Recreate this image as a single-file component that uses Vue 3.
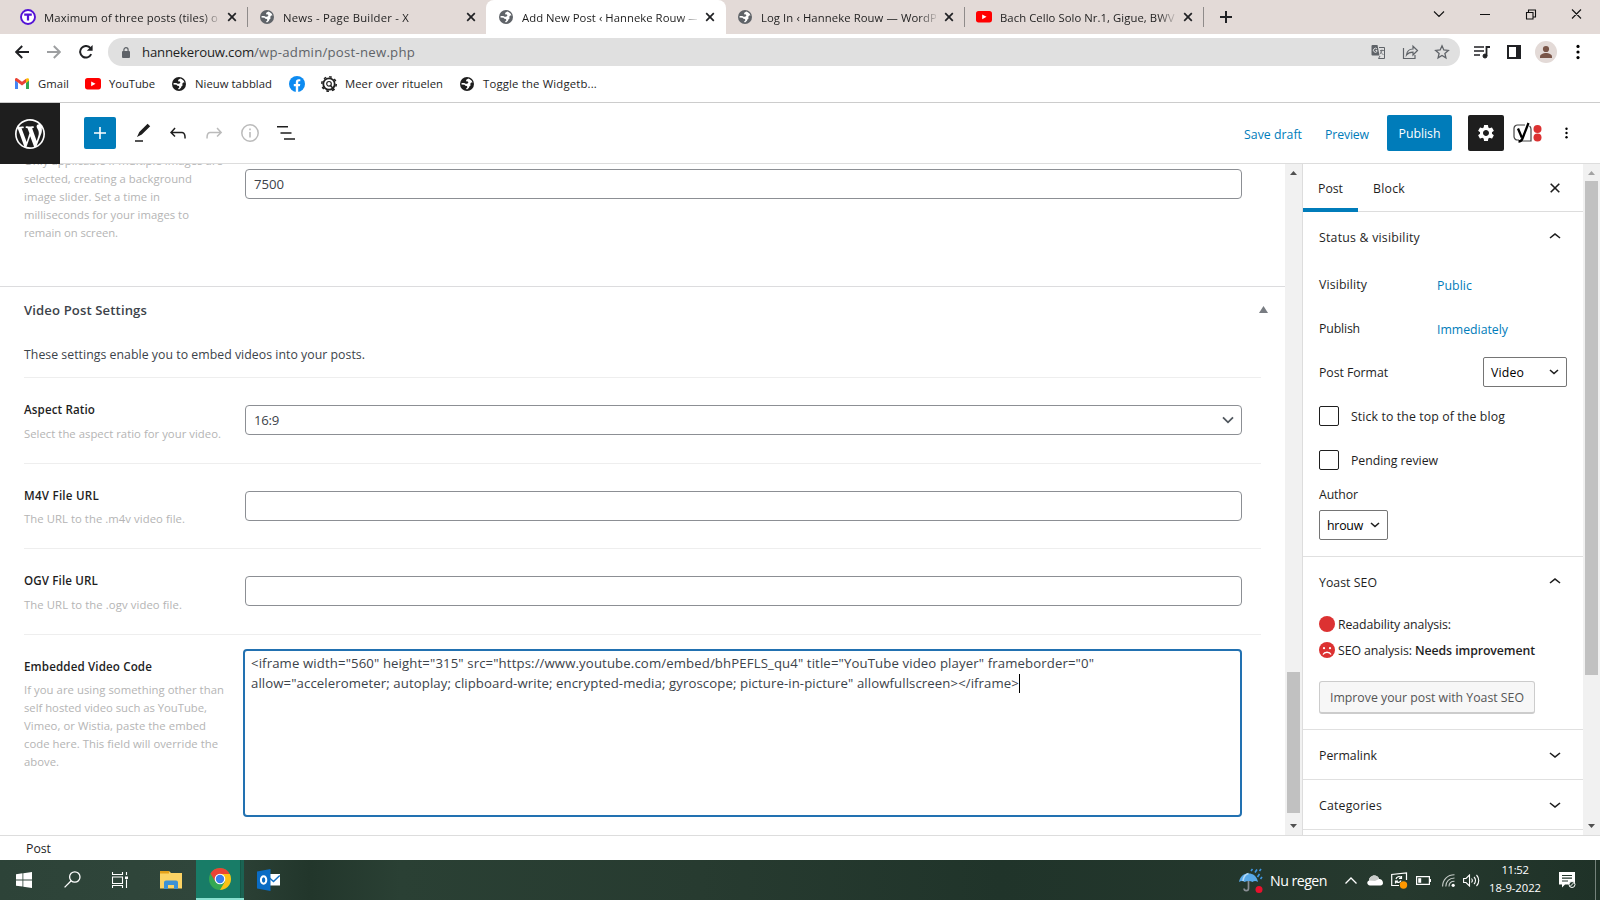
<script setup>
// Spreads the letters of a label so that it takes up the given width.
const vFit = {
  mounted(el, { value }) {
    const natural = el.getBoundingClientRect().width
    const count = el.textContent.length
    el.style.letterSpacing = ((value - natural) / count).toFixed(3) + 'px'
  }
}

const tabs = [
  { icon: 'tribe', text: 'Maximum of three posts (tiles) on', w: 181, sep: true },
  { icon: 'globe', text: 'News - Page Builder - X', w: 126 },
  { icon: 'globe', text: 'Add New Post ‹ Hanneke Rouw — W', w: 191, active: true },
  { icon: 'globe', text: 'Log In ‹ Hanneke Rouw — WordPress', w: 198, sep: true },
  { icon: 'yt', text: 'Bach Cello Solo Nr.1, Gigue, BWV 1', w: 184, sep: true }
]

const sliderHelp = [
  ['Only applicable if multiple images are', 199],
  ['selected, creating a background', 168],
  ['image slider. Set a time in', 136],
  ['milliseconds for your images to', 165],
  ['remain on screen.', 94]
]
const rows = [
  { label: 'Aspect Ratio', lw: 71, help: [['Select the aspect ratio for your video.', 197]], value: '16:9', cls: 'r1' },
  { label: 'M4V File URL', lw: 75, help: [['The URL to the .m4v video file.', 161]], cls: 'r2' },
  { label: 'OGV File URL', lw: 74, help: [['The URL to the .ogv video file.', 158]], cls: 'r3' }
]
const embedHelp = [
  ['If you are using something other than', 200],
  ['self hosted video such as YouTube,', 183],
  ['Vimeo, or Wistia, paste the embed', 182],
  ['code here. This field will override the', 194],
  ['above.', 35]
]
const code = [
  ['<iframe width="560" height="315" src="https://www.youtube.com/embed/bhPEFLS_qu4" title="YouTube video player" frameborder="0"', 843],
  ['allow="accelerometer; autoplay; clipboard-write; encrypted-media; gyroscope; picture-in-picture" allowfullscreen></iframe>', 768]
]
</script>

<template>
  <div class="screen">
    <svg class="defs" width="0" height="0">
      <symbol id="globe" viewBox="0 0 14 14">
        <circle cx="7" cy="7" r="7" fill="currentColor" />
        <path d="M8.300 1.600 6.300 2.700l-.3 1.500 1.900.3.500 1.100-1.200 1.100H5.600L4.300 5.900l-2.700.2-.1 1.300 3 .3.900 1.100 1.500.2.5 1.200-1.400 1.600 1 .6 2-1.600.4-1.400 1.300-1.200-.5-1.100.9-1.500 1.400-.2-.8-1.700-1.800-1.400z" fill="#fff" />
      </symbol>
      <symbol id="yt" viewBox="0 0 16 12">
        <rect width="16" height="11.4" rx="2.6" fill="#f00" />
        <path d="M6.2 3.4v4.8l4.3-2.4z" fill="#fff" />
      </symbol>
      <symbol id="tribe" viewBox="0 0 16 16">
        <circle cx="8" cy="8" r="7" fill="#fff" stroke="#5312d6" stroke-width="1.9" />
        <path d="M4.2 5.6h7.6M8 5.6v6" stroke="#5312d6" stroke-width="2.2" fill="none" />
      </symbol>
      <symbol id="up" viewBox="0 0 24 24"><path d="M6.5 12.4L12 8l5.5 4.4-.9 1.2L12 10l-4.5 3.6-1-1.2z" /></symbol>
      <symbol id="down" viewBox="0 0 24 24"><path d="M17.5 11.6L12 16l-5.5-4.4.9-1.2L12 14l4.5-3.6 1 1.2z" /></symbol>
      <symbol id="dots" viewBox="0 0 4 16"><circle cx="2" cy="2.4" r="1.6" /><circle cx="2" cy="8" r="1.6" /><circle cx="2" cy="13.6" r="1.6" /></symbol>
    </svg>

    <!-- Tab strip -->
    <div class="tabs">
      <div v-for="t in tabs" :key="t.text" class="tab" :class="{ active: t.active, sep: t.sep }">
        <svg class="fav" :class="t.icon"><use :href="'#' + t.icon" /></svg>
        <div class="tabtext"><span v-fit="t.w">{{ t.text }}</span></div>
        <svg class="x" viewBox="0 0 10 10"><path d="M1.2 1.2l7.6 7.6M8.8 1.2L1.2 8.8" stroke="#202124" stroke-width="1.7" /></svg>
      </div>
      <svg class="plus" viewBox="0 0 12 12"><path d="M6 0v12M0 6h12" stroke="#202124" stroke-width="2" /></svg>
      <svg class="win" width="150" height="14" viewBox="0 0 150 14" fill="none" stroke="#111" stroke-width="1.1">
        <path d="M4 4.5l5 5 5-5M50 7.5h10M96.5 5.5h6.500v6.500h-6.500zM98.500 5.500v-2.500h7v7h-2.500M142 2.500l9 9M151 2.500l-9 9" />
      </svg>
    </div>

    <!-- Toolbar -->
    <div class="toolbar">
      <svg class="back" viewBox="0 0 14 14"><path d="M14 7H1.500M7.200 1L1.200 7l6 6" fill="none" stroke="#202124" stroke-width="1.900" /></svg>
      <svg class="fwd" viewBox="0 0 14 14"><path d="M0 7h12.500M6.800 1l6 6-6 6" fill="none" stroke="#9d9fa1" stroke-width="1.900" /></svg>
      <svg class="reload" viewBox="0 0 14 14"><path d="M12.200 9.200A5.800 5.800 0 1 1 11.500 3.200" fill="none" stroke="#202124" stroke-width="2" /><path d="M13.600 0v5.800H7.800z" fill="#202124" /></svg>
      <div class="omni">
        <svg class="lock" viewBox="0 0 8 11"><rect y="4" width="8" height="7" rx="1" fill="#5f6368" /><path d="M1.900 4.500V2.800a2.100 2.100 0 0 1 4.200 0v1.700" fill="none" stroke="#5f6368" stroke-width="1.200" /></svg>
        <span v-fit="112" class="host">hannekerouw.com</span><span v-fit="161" class="path">/wp-admin/post-new.php</span>
        <svg class="oicons" width="80" height="16" viewBox="0 0 80 16" fill="none" stroke="#5f6368">
          <path d="M1.500 1h5l2 10.500h-7a1 1 0 0 1-1-1V2a1 1 0 0 1 1-1z" fill="#5f6368" stroke="none" />
          <path d="M8 3.500h5.500v11H7.500L9 12" /><path d="M9 6.500h4M11 5.500c0 2-1 3.500-2 4.500M9.500 7.500c.5 1.500 1.500 2.500 3 3" stroke-width=".8" />
          <path d="M6 5a2 2 0 1 0 0 2.500V6.500H4.500" stroke="#eee" stroke-width=".9" />
          <path d="M32.500 4v10.500H44V11M35.500 11c.5-4 3-6 6.500-6V2.200L46.500 6.500 42 11V8.200c-3 0-5 .8-6.500 2.800z" stroke-width="1.200" />
          <path d="M71 1.800l1.800 4.200 4.500.4-3.400 3 1 4.400L71 11.500l-3.900 2.300 1-4.400-3.400-3 4.500-.4z" stroke-width="1.300" />
        </svg>
      </div>
      <svg class="music" viewBox="0 0 16 14" stroke="#202124" fill="#202124"><path d="M0 2h10M0 6h10M0 10h6" stroke-width="1.700" /><path d="M12.500 11V2H16" fill="none" stroke-width="1.800" /><circle cx="11" cy="11" r="2" /></svg>
      <svg class="panel" viewBox="0 0 14 14"><path d="M1 1h12v12H1z" fill="none" stroke="#202124" stroke-width="2" /><path d="M9 1h5v12H9z" fill="#202124" /></svg>
      <svg class="avatar" viewBox="0 0 22 22"><circle cx="11" cy="11" r="11" fill="#e3dad7" /><circle cx="11" cy="8" r="3.100" fill="#795548" /><path d="M5 17v-1.500c0-2.300 3.500-3.500 6-3.500s6 1.200 6 3.500V17z" fill="#795548" /></svg>
      <svg class="cdots"><use href="#dots" /></svg>
    </div>

    <!-- Bookmarks -->
    <div class="bookmarks">
      <div class="bm b1"><svg width="14" height="11" viewBox="0 0 14 11"><path d="M0 1.500V11h3V4.500z" fill="#4285f4" /><path d="M14 1.500V11h-3V4.500z" fill="#34a853" /><path d="M0 1.300C0 0 1.500-.4 2.500.4L7 3.800 11 .7V4.500l-4 3-4-3-3-2z" fill="#ea4335" /><path d="M11 .7c1-.9 3-.6 3 1v1L11 5z" fill="#fbbc04" /></svg><span v-fit="31">Gmail</span></div>
      <div class="bm b2"><svg width="16" height="12"><use href="#yt" /></svg><span v-fit="46">YouTube</span></div>
      <div class="bm b3"><svg width="14" height="14"><use href="#globe" /></svg><span v-fit="77">Nieuw tabblad</span></div>
      <div class="bm b4"><svg width="16" height="16" viewBox="0 0 16 16"><circle cx="8" cy="8" r="8" fill="#0d8bf1" /><path d="M6.800 16v-5.700H4.800V8h2V6.300c0-2 1.100-3.100 2.900-3.100.8 0 1.600.15 1.600.15v1.900h-.9c-.9 0-1.200.6-1.200 1.200V8h2.100l-.4 2.300H9.200V16z" fill="#fff" /></svg></div>
      <div class="bm b5"><svg width="16" height="16" viewBox="0 0 16 16" fill="none" stroke="#222"><circle cx="8" cy="8" r="5.700" stroke-width="1.800" /><circle cx="8" cy="8" r="7.200" stroke-width="1.600" stroke-dasharray="2.600 3.050" /><circle cx="8" cy="7.800" r="2.300" stroke-width="1.200" /><path d="M9.500 9.500L13.500 14" stroke-width="1.500" /></svg><span v-fit="98">Meer over rituelen</span></div>
      <div class="bm b6"><svg width="14" height="14"><use href="#globe" /></svg><span v-fit="114">Toggle the Widgetb...</span></div>
    </div>

    <!-- Editor header -->
    <div class="header">
      <div class="wp"><svg width="30" height="30" viewBox="0 0 20 20" fill="#fff"><path d="M20 10c0-5.510-4.490-10-10-10C4.480 0 0 4.490 0 10c0 5.520 4.480 10 10 10 5.510 0 10-4.480 10-10zM7.780 15.370L4.370 6.220c.55-.02 1.170-.08 1.170-.08.5-.06.44-1.130-.06-1.110 0 0-1.450.11-2.370.11-.18 0-.37 0-.58-.01C4.120 2.690 6.870 1.110 10 1.110c2.330 0 4.450.87 6.050 2.340-.68-.11-1.650.39-1.650 1.580 0 .74.45 1.360.9 2.100.35.61.55 1.360.55 2.460 0 1.490-1.400 5-1.400 5l-3.030-8.370c.54-.02.82-.17.82-.17.5-.05.44-1.250-.06-1.220 0 0-1.440.12-2.380.12-.87 0-2.330-.12-2.330-.12-.5-.03-.56 1.200-.06 1.220l.92.08 1.260 3.410zM17.410 10c.24-.64.74-1.870.43-4.250.7 1.290 1.050 2.710 1.050 4.250 0 3.290-1.730 6.240-4.400 7.780.97-2.590 1.940-5.200 2.920-7.780zM6.100 18.090C3.120 16.650 1.110 13.530 1.110 10c0-1.300.23-2.480.72-3.590C3.250 10.300 4.670 14.200 6.100 18.090zm4.030-6.630l2.580 6.980c-.86.29-1.760.45-2.710.45-.79 0-1.570-.11-2.290-.33.81-2.380 1.620-4.740 2.420-7.100z" /></svg></div>
      <div class="add"><svg width="24" height="24" viewBox="0 0 24 24"><path d="M12 6v12M6 12h12" stroke="#fff" stroke-width="1.600" /></svg></div>
      <div class="tools">
        <svg viewBox="0 0 24 24"><path d="M20.200 5.300L17.600 2.800 9.300 10.900l-2.300 5.100 4.800-2.400zM5 19.200h8v1.600H5z" fill="#1e1e1e" /></svg>
        <svg viewBox="0 0 24 24"><path d="M18.300 11.700c-.6-.6-1.400-.9-2.300-.9H6.700l2.900-3.300-1.100-1-4.500 5L8.500 16l1-1-2.700-2.700H16c.5 0 .9.2 1.300.5 1 1 1 3.400 1 4.500v.3h1.500v-.2c0-1.500 0-4.300-1.500-5.700z" fill="#1e1e1e" /></svg>
        <svg viewBox="0 0 24 24"><path d="M15.600 6.500l-1.100 1 2.900 3.300H8c-.9 0-1.700.3-2.300.9-1.400 1.500-1.400 4.200-1.400 5.600v.2h1.500v-.3c0-1.100 0-3.500 1-4.500.3-.3.7-.5 1.300-.5h9.200L14.500 15l1.100 1.100 4.600-4.600-4.600-5z" fill="#bbb" /></svg>
        <svg viewBox="0 0 24 24"><circle cx="12" cy="12" r="8.200" fill="none" stroke="#bbb" stroke-width="1.500" /><path d="M11.200 11h1.600v5.500h-1.600zM11.200 7.500h1.600v1.700h-1.600z" fill="#bbb" /></svg>
        <svg viewBox="0 0 24 24"><path d="M3 5h11v1.600H3zM6.500 11.200h11v1.600h-11zM21 17.200H10v1.600h11z" fill="#1e1e1e" /></svg>
      </div>
      <div class="actions">
        <span v-fit="58" class="link">Save draft</span>
        <span v-fit="44" class="link">Preview</span>
        <div class="publish"><span v-fit="42">Publish</span></div>
        <div class="cog"><svg width="20" height="20" viewBox="0 0 24 24" fill="#fff"><path d="M19.140 12.940c.04-.3.06-.61.06-.94 0-.32-.02-.64-.07-.94l2.030-1.580c.18-.14.23-.41.12-.61l-1.920-3.320c-.12-.22-.37-.29-.59-.22l-2.390.96c-.5-.38-1.030-.7-1.620-.94L14.400 2.810c-.04-.24-.24-.41-.48-.41h-3.840c-.24 0-.43.17-.47.41L9.250 5.350c-.59.24-1.130.57-1.620.94l-2.390-.96c-.22-.08-.47 0-.59.22L2.740 8.870c-.12.21-.08.47.12.61l2.030 1.580c-.05.3-.09.63-.09.94s.02.64.07.94l-2.030 1.580c-.18.14-.23.41-.12.61l1.920 3.320c.12.22.37.29.59.22l2.390-.96c.5.38 1.030.7 1.620.94l.36 2.540c.05.24.24.41.48.41h3.840c.24 0 .44-.17.47-.41l.36-2.540c.59-.24 1.130-.56 1.620-.94l2.390.96c.22.08.47 0 .59-.22l1.920-3.320c.12-.22.07-.47-.12-.61zM12 15.600c-1.980 0-3.600-1.620-3.600-3.600s1.620-3.600 3.600-3.600 3.600 1.620 3.600 3.600-1.620 3.600-3.600 3.600z" /></svg></div>
        <svg class="yoast" width="30" height="22" viewBox="0 0 30 22"><path d="M12 3H4.500A3.500 3.500 0 0 0 1 6.500v8A3.500 3.500 0 0 0 4.500 18H6M8 19h10V7a4 4 0 0 0-1.500-3" fill="none" stroke="#444" stroke-width="1.200" /><path d="M5 6.500l3.800 9M15.500 1L9.500 16.500c-.8 2-1.800 3-4 3" fill="none" stroke="#000" stroke-width="2.300" /><circle cx="24.500" cy="7" r="4" fill="#dc3232" /><circle cx="24.500" cy="15.500" r="4" fill="#dc3232" /></svg>
        <svg class="hdots"><use href="#dots" /></svg>
      </div>
    </div>

    <!-- Editor body -->
    <div class="body">
      <div class="main">
        <div class="slider">
          <div class="help"><div v-for="l in sliderHelp" :key="l[0]"><span v-fit="l[1]">{{ l[0] }}</span></div></div>
          <div class="input"><span v-fit="30">7500</span></div>
        </div>
        <div class="videohead">
          <span v-fit="123" class="title">Video Post Settings</span>
          <svg width="9" height="7" viewBox="0 0 9 7"><path d="M4.500 0L9 7H0z" fill="#787c82" /></svg>
        </div>
        <div class="intro"><span v-fit="341">These settings enable you to embed videos into your posts.</span></div>
        <div v-for="r in rows" :key="r.label" class="row" :class="r.cls">
          <div class="left">
            <div class="label"><span v-fit="r.lw">{{ r.label }}</span></div>
            <div class="help"><div v-for="l in r.help" :key="l[0]"><span v-fit="l[1]">{{ l[0] }}</span></div></div>
          </div>
          <div class="input">
            <span v-if="r.value" v-fit="25">{{ r.value }}</span>
            <svg v-if="r.value" width="12" height="8" viewBox="0 0 12 8"><path d="M1 1.300l5 5 5-5" fill="none" stroke="#50575e" stroke-width="1.800" /></svg>
          </div>
        </div>
        <div class="row r4">
          <div class="left">
            <div class="label"><span v-fit="128">Embedded Video Code</span></div>
            <div class="help"><div v-for="l in embedHelp" :key="l[0]"><span v-fit="l[1]">{{ l[0] }}</span></div></div>
          </div>
          <div class="textarea">
            <div v-for="(l, i) in code" :key="i" class="cl"><span v-fit="l[1]">{{ l[0] }}</span><i v-if="i === 1" class="caret"></i></div>
          </div>
        </div>
      </div>

      <div class="scroll s1">
        <svg viewBox="0 0 7 4"><path d="M3.500 0L7 4H0z" fill="#505050" /></svg>
        <div class="thumb"></div>
        <svg viewBox="0 0 7 4"><path d="M0 0h7L3.500 4z" fill="#505050" /></svg>
      </div>

      <div class="side">
        <div class="stabs">
          <div class="stab on"><span v-fit="25">Post</span></div>
          <div class="stab"><span v-fit="32">Block</span></div>
          <svg class="sx" viewBox="0 0 10 10"><path d="M.7.7l8.600 8.600M9.300.7L.7 9.300" stroke="#1e1e1e" stroke-width="1.600" /></svg>
        </div>
        <div class="sec status">
          <div class="h"><span v-fit="101">Status &amp; visibility</span><svg><use href="#up" /></svg></div>
          <div class="kv"><div class="key"><span v-fit="48">Visibility</span></div><span v-fit="35" class="link">Public</span></div>
          <div class="kv"><div class="key"><span v-fit="41">Publish</span></div><span v-fit="71" class="link">Immediately</span></div>
          <div class="kv"><div class="key"><span v-fit="69">Post Format</span></div><div class="select vid"><span v-fit="33">Video</span><svg viewBox="0 0 10 6"><path d="M1 1l4 3.500L9 1" fill="none" stroke="#1e1e1e" stroke-width="1.600" /></svg></div></div>
          <div class="kv"><i class="cb"></i><span v-fit="154">Stick to the top of the blog</span></div>
          <div class="kv"><i class="cb"></i><span v-fit="87">Pending review</span></div>
          <div class="author"><span v-fit="39">Author</span></div>
          <div class="select usr"><span v-fit="36">hrouw</span><svg viewBox="0 0 10 6"><path d="M1 1l4 3.500L9 1" fill="none" stroke="#1e1e1e" stroke-width="1.600" /></svg></div>
        </div>
        <div class="sec seo">
          <div class="h"><span v-fit="58">Yoast SEO</span><svg><use href="#up" /></svg></div>
          <div class="an"><svg viewBox="0 0 16 16"><circle cx="8" cy="8" r="8" fill="#dc3232" /></svg><span v-fit="113">Readability analysis:</span></div>
          <div class="an"><svg viewBox="0 0 16 16"><circle cx="8" cy="8" r="8" fill="#dc3232" /><circle cx="5" cy="6.200" r="1.100" fill="#fff" /><circle cx="11" cy="6.200" r="1.100" fill="#fff" /><path d="M4 12.500c1.500-3 6.500-3 8 0" fill="none" stroke="#fff" stroke-width="1.300" /></svg><span v-fit="77">SEO analysis: </span><b v-fit="120">Needs improvement</b></div>
          <div class="improve"><span v-fit="194">Improve your post with Yoast SEO</span></div>
        </div>
        <div class="sec fold"><div class="h"><span v-fit="58">Permalink</span><svg><use href="#down" /></svg></div></div>
        <div class="sec fold"><div class="h"><span v-fit="63">Categories</span><svg><use href="#down" /></svg></div></div>
      </div>

      <div class="scroll s2">
        <svg viewBox="0 0 7 4"><path d="M3.500 0L7 4H0z" fill="#a3a3a3" /></svg>
        <div class="thumb"></div>
        <svg viewBox="0 0 7 4"><path d="M0 0h7L3.500 4z" fill="#505050" /></svg>
      </div>
    </div>

    <div class="footer"><span v-fit="25">Post</span></div>

    <!-- Taskbar -->
    <div class="taskbar">
      <div class="app"><svg width="16" height="16" viewBox="0 0 16 16" fill="#fff"><path d="M0 2.200l6.500-.9v6.200H0zM7.300 1.200L16 0v7.500H7.300zM0 8.400h6.500v6.200L0 13.700zM7.300 8.400H16V16l-8.700-1.200z" /></svg></div>
      <div class="app"><svg class="search" width="17" height="17" viewBox="0 0 17 17" fill="none" stroke="#fff" stroke-width="1.300"><circle cx="10.800" cy="6" r="5.200" /><path d="M7.200 9.800L.6 16.400" /></svg></div>
      <div class="app"><svg width="16" height="16" viewBox="0 0 16 16" fill="none" stroke="#fff" stroke-width="1.100"><path d="M.5 0v2.500h10V0M.5 5h10v6.500H.5zM.5 16v-2.500h10V16M14.500 0v3M14.500 7.500V16" /><path d="M13 4.500h3v2.500h-3z" fill="#fff" stroke="none" /></svg></div>
      <div class="app"><svg width="22" height="18" viewBox="0 0 22 18"><path d="M0 0h9l2 2h11v15.500H0z" fill="#fcd364" /><path d="M0 0h9v2.500H0z" fill="#e5a11a" /><path d="M4 18v-6.500a2 2 0 0 1 2-2h10a2 2 0 0 1 2 2V18h-4v-4H8v4z" fill="#3c91d6" /></svg></div>
      <div class="app chrome"><svg width="22" height="22" viewBox="0 0 22 22"><circle cx="11" cy="11" r="11" fill="#34a853" /><path d="M11 11L1.470 5.500A11 11 0 0 1 20.530 5.500z" fill="#ea4335" /><path d="M11 6h9.800A11 11 0 0 1 11 22l5-8.500z" fill="#fbc116" /><path d="M1.470 5.500L6.300 13.500 11 11V6z" fill="#ea4335" /><circle cx="11" cy="11" r="5.300" fill="#fff" /><circle cx="11" cy="11" r="4.200" fill="#3b7ded" /></svg></div>
      <div class="app"><svg width="23" height="22" viewBox="0 0 23 22"><path d="M12 5h11v11.500H12z" fill="#fff" /><path d="M12.500 9l4 3.500L22.800 6.500" fill="none" stroke="#0f6fc5" stroke-width="1.500" /><path d="M0 2.500L13.500 0v22L0 19.500z" fill="#0a6cc4" /><ellipse cx="6.600" cy="11" rx="2.700" ry="3.700" fill="none" stroke="#fff" stroke-width="2" /></svg></div>
      <div class="tray">
        <svg class="umb" width="24" height="25" viewBox="0 0 24 25"><path d="M9.500 13v7.500a2.200 2.200 0 0 1-4.400 0" fill="none" stroke="#8a8f94" stroke-width="1.700" /><path d="M0 14C1 8 5 5.500 9.500 5.500S18 8 19 14c-2-1.500-4-1.500-5.500 0-2-1.500-5.500-1.500-8 0-1.500-1.500-3.500-1.500-5.500 0z" fill="#58a9e8" /><path d="M4 13c.5-4 3-7 5.500-7.500" fill="none" stroke="#b4daf6" stroke-width="1.500" /><path d="M12 3l1.500-2M16 4.500l2-3M20.500 3L22 1M18.500 9l2-3M21.500 11l1.500-2" stroke="#3f97e3" stroke-width="1.600" /><circle cx="20" cy="21.500" r="3.500" fill="#e8112d" /></svg>
        <span v-fit="57" class="weather">Nu regen</span>
        <svg class="tup" width="12" height="7" viewBox="0 0 12 7"><path d="M.5 6.500L6 1l5.500 5.500" fill="none" stroke="#fff" stroke-width="1.300" /></svg>
        <svg class="cloud" width="16" height="11" viewBox="0 0 16 11"><path d="M3 10.500C0 10.500-.8 6.500 2 5.500 2 2.500 5 0 8 .5c2.500.3 3.500 2 4 3.500 3 0 4 2.500 4 4s-1 2.500-2.500 2.500z" fill="#fff" /><path d="M2 5.500C2 2.500 5 0 8 .5c2.500.3 3.500 2 4 3.500L8 6z" fill="#c9ccca" /></svg>
        <svg class="upd" width="17" height="17" viewBox="0 0 17 17" fill="none" stroke="#fff" stroke-width="1.200"><path d="M8 13.500H.7V2.500L15.500.8V8" /><path d="M5 7a3 3 0 0 1 5-1.500M10.500 4v2.500H8M10 8.500a3 3 0 0 1-5 1M4.500 11.500V9H7" /><circle cx="12.500" cy="13" r="3.700" fill="#ff9800" stroke="none" /></svg>
        <svg class="bat" width="15" height="9" viewBox="0 0 15 9"><path d="M.6.6h12.800v7.800H.6zM14.500 3v3" fill="none" stroke="#fff" stroke-width="1.200" /><path d="M2.200 2.200h3v4.600h-3z" fill="#fff" /></svg>
        <svg class="wifi" width="13" height="13" viewBox="0 0 13 13" fill="none" stroke="#c6cdc9" stroke-width="1.100"><path d="M.6 12.500C.6 5.500 5.500.8 12.500.8M3.800 12.500c0-5 3.500-8.500 8.700-8.500M7 12.500c0-3.300 2.200-5.300 5.500-5.300" /><circle cx="11.200" cy="11.300" r="1.600" fill="#fff" stroke="none" /></svg>
        <svg class="vol" width="17" height="13" viewBox="0 0 17 13" fill="none" stroke="#fff" stroke-width="1.100"><path d="M.6 4.500H3L6.500 1v11L3 8.500H.6zM8.500 4.500c1 1.200 1 2.800 0 4M11 3c2 2 2 5 0 7M13.500 1c3 3.200 3 7.800 0 11" /></svg>
        <div class="clock"><span v-fit="27">11:52</span><span v-fit="52">18-9-2022</span></div>
        <svg class="note" width="17" height="16" viewBox="0 0 17 16"><path d="M0 0h16v12.500H6L3 15.500v-3H0z" fill="#fff" /><path d="M3 3.500h10M3 6.200h10M3 9h6" stroke="#22372c" stroke-width="1.200" /><circle cx="13" cy="12.500" r="3" fill="#22372c" stroke="#fff" stroke-width="1" /><path d="M11 14.500l4-4" stroke="#fff" /></svg>
      </div>
    </div>
  </div>
</template>

<style>
body { margin: 0; overflow: hidden; }
</style>

<style scoped>
.screen { width: 1600px; height: 900px; display: flex; flex-direction: column; background: #fff; overflow: hidden; font-family: "Open Sans", "Noto Sans", sans-serif; font-size: 12.3px; color: #1e1e1e; position: relative; }
.defs { position: absolute; }
span, b { display: inline-block; white-space: pre; flex: none; }
svg { display: block; flex: none; }

.tabs { height: 34px; background: #e3dad7; display: flex; align-items: center; font-size: 11.3px; flex: none; }
.tab { width: 239px; height: 34px; box-sizing: border-box; padding-left: 20px; display: flex; align-items: center; position: relative; flex: none; }
.tab.sep::after { content: ""; position: absolute; right: -9px; top: 7px; width: 1px; height: 20px; background: #8f8b8a; }
.tab.active::before { content: ""; position: absolute; left: 8px; top: 0; width: 240px; height: 34px; background: #fff; border-radius: 8px 8px 0 0; }
.tab > * { position: relative; }
.fav { width: 14px; height: 14px; margin: 0 9px 0 0; color: #5f6368; }
.fav.tribe { width: 16px; height: 16px; margin-right: 8px; }
.fav.yt { width: 16px; height: 12px; margin-right: 8px; }
.fav.globe { margin-left: 1px; }
.tabtext { width: 175px; overflow: hidden; -webkit-mask-image: linear-gradient(90deg, #000 158px, transparent 178px); mask-image: linear-gradient(90deg, #000 158px, transparent 178px); }
.x { width: 10px; height: 10px; margin-left: 8px; }
.plus { width: 12px; height: 12px; margin-left: 25px; }
.win { margin: -7px 20px 0 auto; overflow: visible; }

.toolbar { height: 36px; display: flex; align-items: center; box-sizing: border-box; flex: none; }
.back { width: 14px; height: 14px; margin-left: 15px; }
.fwd { width: 14px; height: 14px; margin-left: 18px; }
.reload { width: 14px; height: 14px; margin-left: 18px; }
.omni { width: 1352px; height: 28px; border-radius: 14px; background: #e0e0e0; margin-left: 15px; display: flex; align-items: center; box-sizing: border-box; padding: 0 9px 0 14px; font-size: 13.2px; }
.lock { width: 8px; height: 11px; margin-right: 12px; }
.path { color: #5f6368; }
.oicons { margin-left: auto; }
.music { width: 16px; height: 14px; margin-left: 14px; }
.panel { width: 14px; height: 14px; margin-left: 17px; }
.avatar { width: 22px; height: 22px; margin-left: 14px; }
.cdots { width: 4px; height: 16px; margin-left: 19px; }

.bookmarks { height: 33px; box-sizing: border-box; border-bottom: 1px solid #ccc; display: flex; align-items: center; font-size: 11.3px; padding: 0 0 5px 15px; flex: none; }
.bm { display: flex; align-items: center; gap: 8px; }
.bm span { margin-top: -1px; }
.b1 { gap: 9px; width: 70px; }
.b2 { width: 87px; }
.b3 { gap: 9px; width: 117px; }
.b4 { width: 32px; }
.b5 { width: 139px; }
.b6 { gap: 9px; }

.header { height: 61px; box-sizing: border-box; border-bottom: 1px solid #ddd; display: flex; align-items: center; flex: none; }
.wp { width: 60px; height: 61px; background: #1e1e1e; display: flex; align-items: center; justify-content: center; margin-bottom: -1px; }
.add { width: 32px; height: 32px; border-radius: 2px; background: #007cba; margin-left: 24px; display: flex; align-items: center; justify-content: center; }
.tools { display: flex; gap: 12px; margin-left: 14px; }
.tools svg { width: 24px; height: 24px; }
.actions { margin-left: auto; display: flex; align-items: center; padding-right: 32px; }
.link { color: #007cba; }
.actions .link { margin: 2px 23px 0 0; }
.actions .link + .link { margin-right: 18px; }
.publish { width: 65px; height: 36px; border-radius: 2px; background: #007cba; color: #fff; display: flex; align-items: center; justify-content: center; padding-top: 0; }
.cog { width: 36px; height: 36px; border-radius: 2px; background: #1e1e1e; margin-left: 16px; display: flex; align-items: center; justify-content: center; }
.yoast { margin-left: 9px; }
.hdots { width: 3px; height: 14px; margin-left: 22px; }

.body { height: 671px; display: flex; flex: none; overflow: hidden; }
.main { width: 1285px; overflow: hidden; }
.slider { height: 122px; border-bottom: 1px solid #dcdcde; display: flex; }
.help { width: 221px; padding-left: 24px; box-sizing: border-box; font-size: 11.3px; line-height: 18px; color: #b4b4b4; }
.help > div { height: 18px; }
.slider .help { width: 245px; margin-top: -12px; }
.input { width: 997px; height: 30px; box-sizing: border-box; border: 1px solid #8c8f94; border-radius: 4px; display: flex; align-items: center; justify-content: space-between; padding: 0 7px 0 8px; font-size: 13.200px; color: #3c434a; flex: none; }
.slider .input { margin-top: 5px; }
.videohead { display: flex; align-items: center; justify-content: space-between; height: 46px; padding: 0 17px 0 24px; }
.videohead svg { margin-top: -2px; }
.title { font-size: 13.100px; font-weight: 600; color: #3c434a; }
.intro { height: 45px; box-sizing: border-box; border-bottom: 1px solid #eee; margin: 0 24px; padding-top: 13px; line-height: 18px; color: #3c434a; }
.row { height: 86px; box-sizing: border-box; border-bottom: 1px solid #eee; margin: 0 24px; display: flex; }
.row .left { width: 221px; flex: none; padding-top: 23px; }
.row .help { width: auto; padding: 0; margin-top: 6px; }
.label { font-size: 11.600px; font-weight: 600; line-height: 18px; height: 18px; }
.row .input { margin-top: 27px; }
.r2 { height: 85px; }
.r2 .help { margin-top: 5px; }
.r4 { height: 200px; border: 0; }
.r4 .help { margin-top: 5px; }
.textarea { width: 999px; height: 168px; margin: 14px 0 0 -2px; box-sizing: border-box; border: 2px solid #2271b1; border-radius: 4px; padding: 2px 6px; font-size: 13.200px; line-height: 20px; color: #3c434a; flex: none; }
.cl { height: 20px; display: flex; align-items: center; }
.caret { width: 1px; height: 19px; background: #000; }

.scroll { width: 17px; background: #f1f1f1; display: flex; flex-direction: column; align-items: center; flex: none; }
.scroll svg { width: 7px; height: 4px; margin-top: 7px; }
.thumb { width: 13px; background: #c1c1c1; }
.s1 .thumb { height: 141px; margin-top: 497px; }
.s1 svg:last-child { margin-top: 11px; }
.s2 .thumb { height: 494px; margin-top: 6px; }
.s2 svg:last-child { margin-top: 149px; }

.side { width: 280px; border-left: 1px solid #ddd; flex: none; overflow: hidden; }
.stabs { height: 47px; border-bottom: 1px solid #ddd; display: flex; font-weight: 500; }
.stab { height: 48px; box-sizing: border-box; padding: 0 15px; display: flex; align-items: center; }
.stab.on { border-bottom: 4px solid #007cba; padding-top: 4px; width: 55px; }
.sx { width: 10px; height: 10px; margin: 19px 23px 0 auto; }
.sec { box-sizing: border-box; border-bottom: 1px solid #e0e0e0; padding: 0 16px; }
.h { height: 50px; display: flex; align-items: center; justify-content: space-between; font-weight: 500; }
.h svg { width: 24px; height: 24px; fill: #1e1e1e; }
.fold .h svg { margin-top: -2px; }
.status { height: 345px; }
.seo { height: 173px; }
.fold { height: 50px; }
.kv { height: 44px; display: flex; align-items: center; }
.kv .link { margin-top: 2px; }
.key { width: 118px; }
.select { height: 30px; box-sizing: border-box; border: 1px solid #757575; border-radius: 2px; display: flex; align-items: center; justify-content: space-between; padding: 0 7px 0 7px; color: #000; }
.select svg { width: 10px; height: 6px; }
.vid { width: 84px; margin-left: auto; }
.usr { width: 69px; margin-top: 5px; }
.cb { width: 20px; height: 20px; box-sizing: border-box; border: 1px solid #1e1e1e; border-radius: 2px; margin-right: 12px; }
.author { height: 20px; margin-top: 3px; line-height: 20px; }
.an { display: flex; align-items: center; height: 26px; }
.seo .h + .an { margin-top: 4px; }
.an svg { width: 16px; height: 16px; margin-right: 3px; }
.an b { font-weight: 600; }
.improve { margin-top: 18px; width: 216px; height: 33px; box-sizing: border-box; border: 1px solid #ccc; border-bottom-width: 2px; border-radius: 3px; background: #f7f7f7; color: #555; display: flex; align-items: center; justify-content: center; }

.footer { height: 25px; box-sizing: border-box; border-top: 1px solid #ddd; padding-left: 26px; display: flex; align-items: center; flex: none; }

.taskbar { height: 40px; background: linear-gradient(90deg, #2d4338 0, #30463b 200px, #22362b 310px, #2a4034 400px, #273b30 700px, #20342a 1000px, #26392e 1400px, #1f3228 1600px); display: flex; align-items: center; color: #fff; flex: none; }
.app { width: 48px; height: 40px; display: flex; align-items: center; justify-content: center; }
.app:nth-child(5) { margin-left: 4px; }
.app:nth-child(4) { margin-left: 3px; margin-right: -3px; }
.search { margin-top: -2px; }
.chrome { background: linear-gradient(90deg, #187c67 44px, #145847 44px, #145847 45px, #1b6353 45px); border-bottom: 2px solid #88e0cf; box-sizing: border-box; }
.tray { margin-left: auto; display: flex; align-items: center; width: 361px; height: 40px; position: relative; }
.tray::after { content: ""; position: absolute; right: 4px; top: 0; width: 1px; height: 40px; background: #74827b; }
.weather { font-size: 14.200px; margin-left: 7px; }
.tup { margin-left: 18px; }
.cloud { margin-left: 10px; }
.upd { margin-left: 8px; }
.bat { margin-left: 8px; }
.wifi { margin-left: 11px; }
.vol { margin-left: 8px; }
.clock { width: 52px; margin-left: 9px; display: flex; flex-direction: column; align-items: center; font-size: 11.300px; line-height: 18px; margin-top: -3px; }
.note { margin-left: 18px; }
</style>
